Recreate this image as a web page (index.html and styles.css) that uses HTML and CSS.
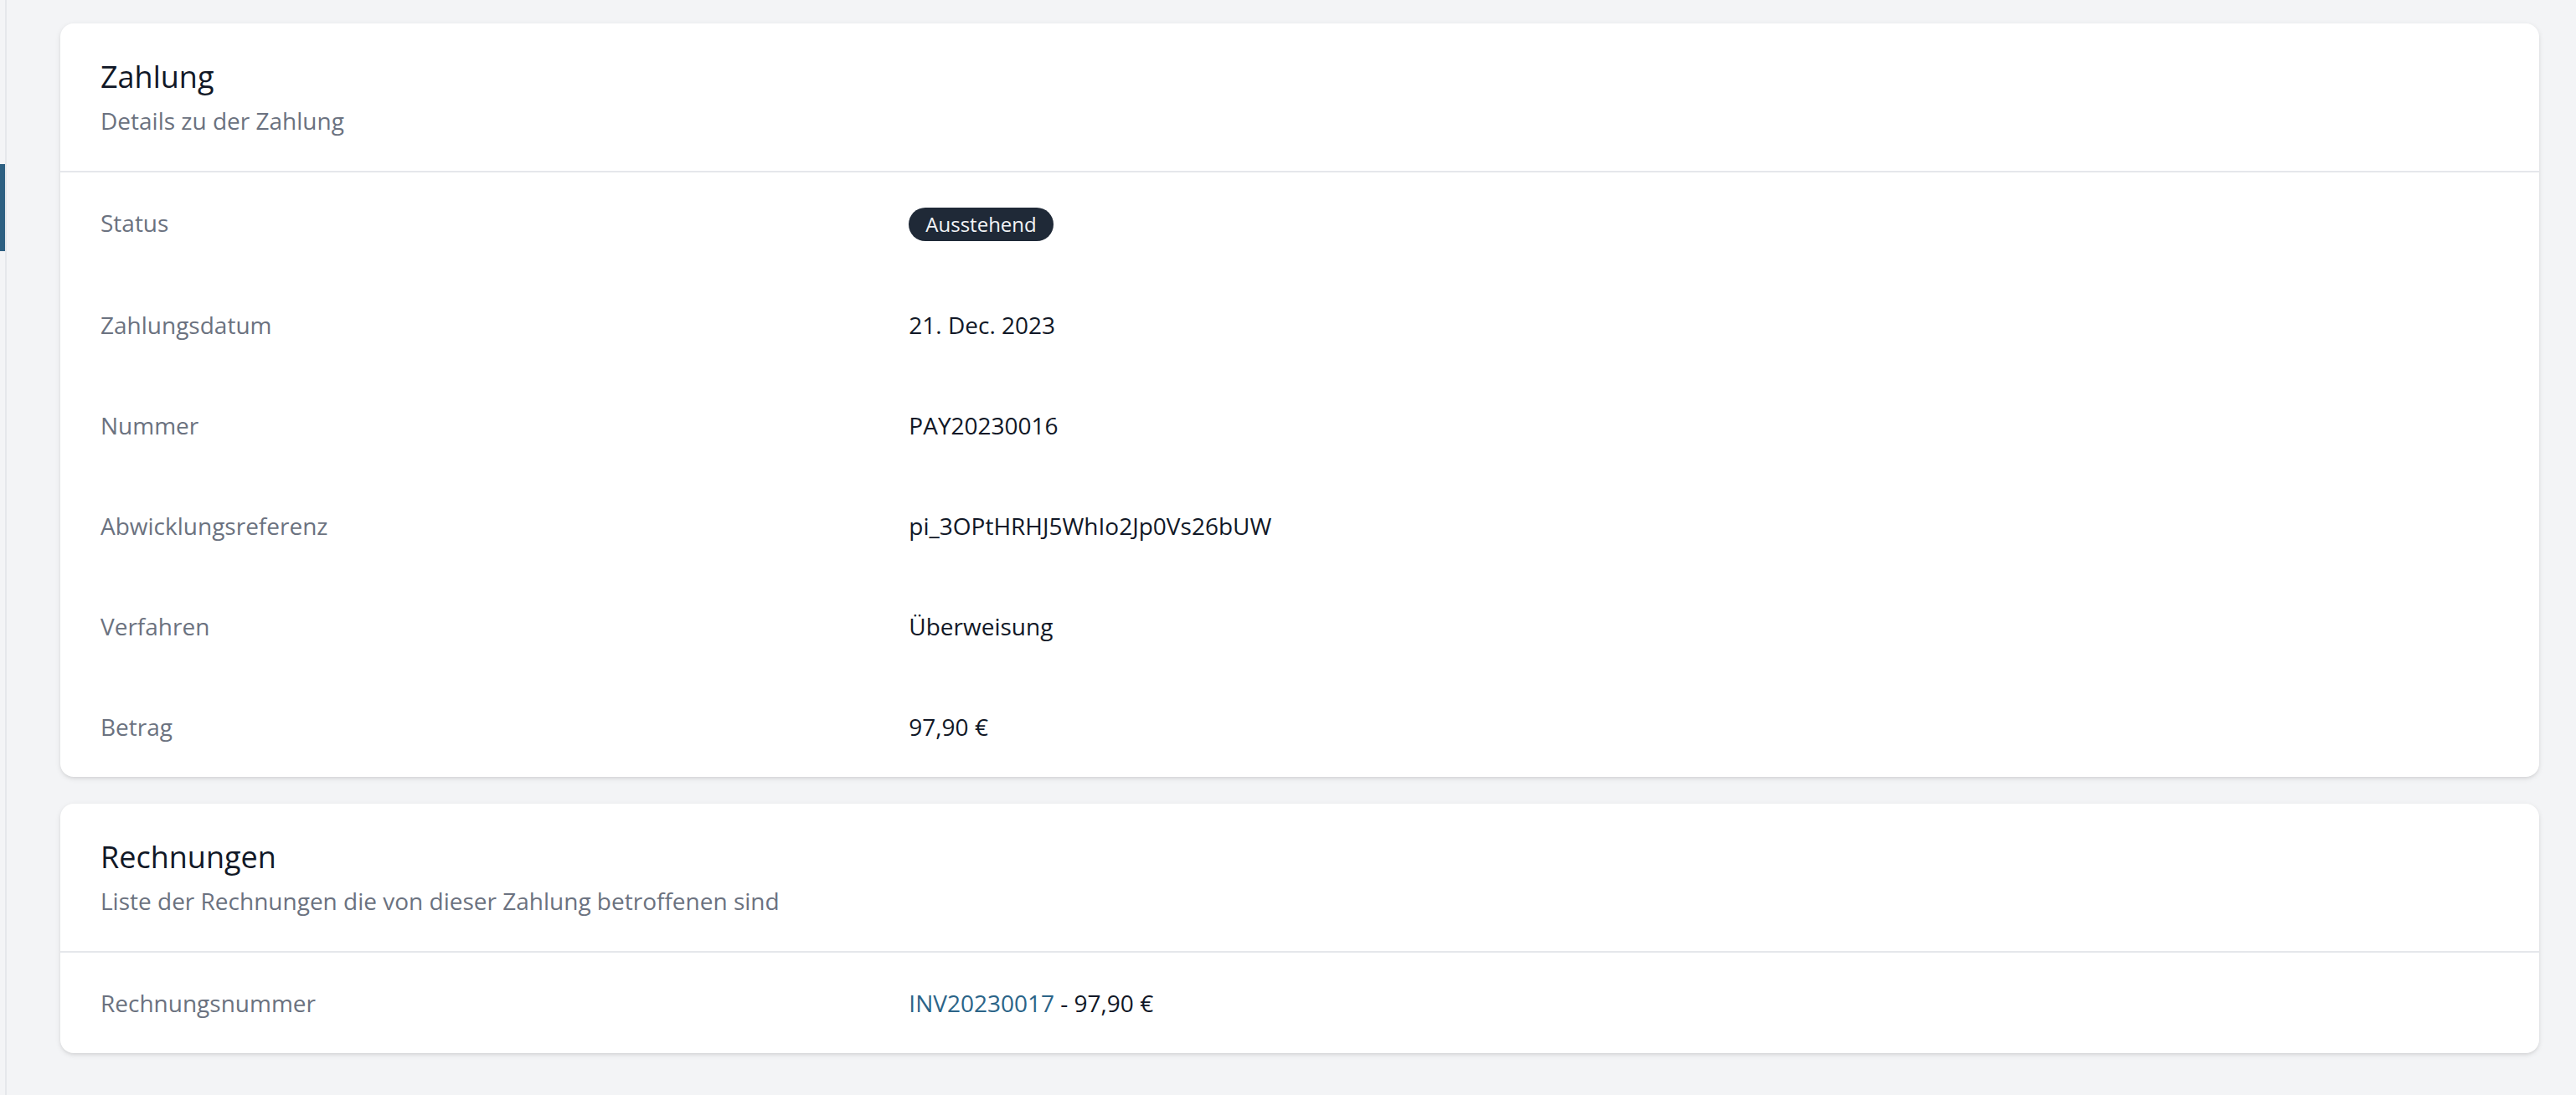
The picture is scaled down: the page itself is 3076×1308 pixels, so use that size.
FILE: index.html
```html
<!DOCTYPE html>
<html lang="de">
<head>
<meta charset="utf-8">
<title>Zahlung</title>
<link rel="stylesheet" href="styles.css">
</head>
<body>
<div class="layout">
  <aside class="sidebar">
    <div class="nav-indicator"></div>
  </aside>
  <main class="main">
    <section class="card">
      <header class="card-header">
        <h3 class="card-title">Zahlung</h3>
        <p class="card-subtitle">Details zu der Zahlung</p>
      </header>
      <dl class="card-body">
        <div class="row">
          <dt class="label">Status</dt>
          <dd class="value"><span class="badge">Ausstehend</span></dd>
        </div>
        <div class="row">
          <dt class="label">Zahlungsdatum</dt>
          <dd class="value">21. Dec. 2023</dd>
        </div>
        <div class="row">
          <dt class="label">Nummer</dt>
          <dd class="value">PAY20230016</dd>
        </div>
        <div class="row">
          <dt class="label">Abwicklungsreferenz</dt>
          <dd class="value">pi_3OPtHRHJ5WhIo2Jp0Vs26bUW</dd>
        </div>
        <div class="row">
          <dt class="label">Verfahren</dt>
          <dd class="value">Überweisung</dd>
        </div>
        <div class="row">
          <dt class="label">Betrag</dt>
          <dd class="value">97,90 €</dd>
        </div>
      </dl>
    </section>
    <section class="card">
      <header class="card-header">
        <h3 class="card-title">Rechnungen</h3>
        <p class="card-subtitle">Liste der Rechnungen die von dieser Zahlung betroffenen sind</p>
      </header>
      <dl class="card-body">
        <div class="row">
          <dt class="label">Rechnungsnummer</dt>
          <dd class="value"><a class="link" href="#">INV20230017</a> - 97,90 €</dd>
        </div>
      </dl>
    </section>
  </main>
</div>
</body>
</html>
```
FILE: styles.css
```css
* { box-sizing: border-box; }
html, body {
  margin: 0;
  padding: 0;
}
body {
  background: #f3f4f6;
  font-family: "Open Sans", "Noto Sans", sans-serif;
  color: #111827;
  min-height: 100vh;
}
.layout {
  display: flex;
  min-height: 100vh;
}
.sidebar {
  width: 8px;
  flex: 0 0 8px;
  border-right: 2px solid #e5e7eb;
  background: #f3f4f6;
}
.nav-indicator {
  margin-top: 196px;
  height: 104px;
  width: 6px;
  background: #2d6082;
}
.main {
  flex: 1;
  padding: 28px 44px 50px 64px;
  display: flex;
  flex-direction: column;
  gap: 32px;
}
.card {
  background: #ffffff;
  border-radius: 16px;
  overflow: hidden;
  box-shadow: 0 2px 6px 0 rgba(0, 0, 0, 0.1), 0 2px 4px -2px rgba(0, 0, 0, 0.1);
}
.card-header {
  padding: 40px 48px;
}
.card-title {
  margin: 0;
  font-size: 36px;
  line-height: 48px;
  font-weight: 400;
  color: #111827;
}
.card-subtitle {
  margin: 8px 0 0;
  font-size: 28px;
  line-height: 40px;
  color: #6b7280;
}
.card-body {
  margin: 0;
  border-top: 2px solid #e5e7eb;
}
.row {
  display: grid;
  grid-template-columns: repeat(3, 1fr);
  gap: 32px;
  padding: 40px 48px;
}
.label {
  font-size: 28px;
  line-height: 40px;
  color: #6b7280;
}
.value {
  grid-column: span 2;
  margin: 0;
  font-size: 28px;
  line-height: 40px;
  color: #111827;
}
.badge {
  display: inline-flex;
  align-items: center;
  padding: 4px 20px;
  border-radius: 9999px;
  background: #1f2937;
  color: #f3f4f6;
  font-size: 24px;
  line-height: 32px;
}
.link {
  color: #2b6488;
  text-decoration: none;
}
```
